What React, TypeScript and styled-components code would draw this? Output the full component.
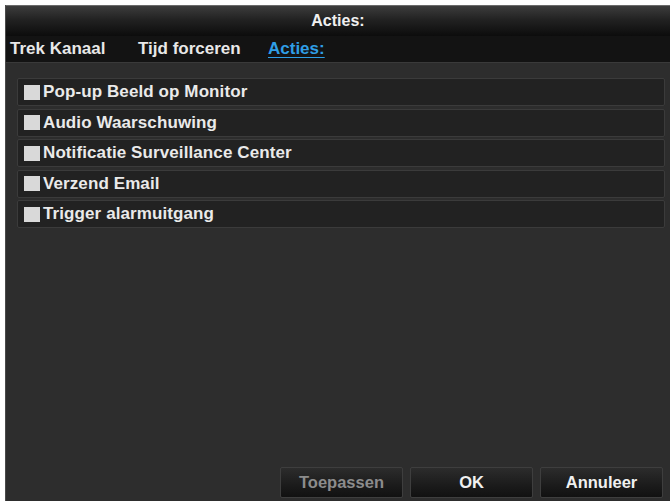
import React from "react";
import styled, { createGlobalStyle } from "styled-components";

const Global = createGlobalStyle`
  html, body { margin: 0; padding: 0; background: #ffffff; }
  body { font-family: "Liberation Sans", Arial, sans-serif; }
`;

const Window = styled.div`
  margin: 5px 0 0 5px;
  width: 665px;
  height: 496px;
  display: flex;
  flex-direction: column;
  background: #2d2d2d;
  border-left: 1px solid #4a4a4a;
  box-sizing: border-box;
  overflow: hidden;
`;

const TitleBar = styled.div`
  height: 31px;
  flex: none;
  display: flex;
  align-items: center;
  justify-content: center;
  background: linear-gradient(to bottom, #3c3c3c 0%, #222 45%, #0c0c0c 100%);
  border-top: 1px solid #6a6a6a;
  box-sizing: border-box;
  color: #f0f0f0;
  font-weight: bold;
  font-size: 16px;
`;

const TabBar = styled.div`
  height: 27px;
  flex: none;
  display: flex;
  align-items: center;
  padding-left: 4px;
  background: #131313;
  border-bottom: 1px solid #3a3a3a;
  box-sizing: border-box;
`;

const Tab = styled.div<{ $w?: number; $active?: boolean }>`
  width: ${(p) => (p.$w ? `${p.$w}px` : "auto")};
  font-size: 17px;
  font-weight: bold;
  color: ${(p) => (p.$active ? "#2f9ee6" : "#e8e8e8")};
  text-decoration: ${(p) => (p.$active ? "underline" : "none")};
  text-underline-offset: 3px;
  white-space: nowrap;
`;

const Content = styled.div`
  flex: 1;
  display: flex;
  flex-direction: column;
  padding: 15px 5px 3px 11px;
`;

const List = styled.div`
  display: flex;
  flex-direction: column;
  gap: 2.5px;
`;

const Row = styled.label`
  height: 28px;
  box-sizing: border-box;
  display: flex;
  align-items: center;
  gap: 3px;
  padding-left: 6px;
  background: #222222;
  border: 1px solid #3b3b3b;
  border-radius: 2px;
  color: #eaeaea;
  font-size: 17px;
  font-weight: bold;
  letter-spacing: 0.1px;
  white-space: nowrap;
`;

const Box = styled.span`
  width: 16px;
  height: 15px;
  background: #d9d9d9;
  flex: none;
`;

const Footer = styled.div`
  margin-top: auto;
  display: flex;
  justify-content: flex-end;
  gap: 7px;
  padding-right: 2px;
`;

const Button = styled.button<{ $disabled?: boolean }>`
  width: 123px;
  height: 31px;
  background: linear-gradient(to bottom, #2c2c2c 0%, #1b1b1b 60%, #111 100%);
  border: 1px solid #3e3e3e;
  border-radius: 2px;
  color: ${(p) => (p.$disabled ? "#8c8c8c" : "#f0f0f0")};
  font-family: "Liberation Sans", Arial, sans-serif;
  font-size: 16.5px;
  font-weight: bold;
  padding: 0;
`;

const items = [
  "Pop-up Beeld op Monitor",
  "Audio Waarschuwing",
  "Notificatie Surveillance Center",
  "Verzend Email",
  "Trigger alarmuitgang",
];

export default function App() {
  return (
    <>
      <Global />
      <Window>
        <TitleBar>Acties:</TitleBar>
        <TabBar>
          <Tab $w={128}>Trek Kanaal</Tab>
          <Tab $w={130}>Tijd forceren</Tab>
          <Tab $active>Acties:</Tab>
        </TabBar>
        <Content>
          <List>
            {items.map((t) => (
              <Row key={t}>
                <Box />
                {t}
              </Row>
            ))}
          </List>
          <Footer>
            <Button $disabled>Toepassen</Button>
            <Button>OK</Button>
            <Button>Annuleer</Button>
          </Footer>
        </Content>
      </Window>
    </>
  );
}
